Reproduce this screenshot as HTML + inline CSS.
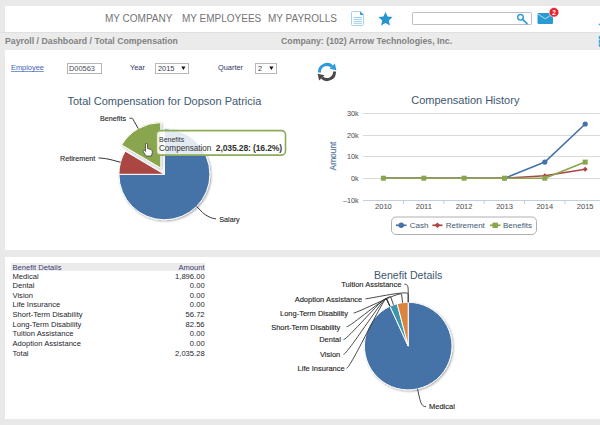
<!DOCTYPE html>
<html><head><meta charset="utf-8">
<style>
*{margin:0;padding:0;box-sizing:border-box}
html,body{width:600px;height:425px;overflow:hidden;background:#e9e9e9;font-family:"Liberation Sans",sans-serif}
.abs{position:absolute;white-space:nowrap}
#hdr{position:absolute;left:5px;top:6px;width:595px;height:26px;background:#fff}
#bc{position:absolute;left:0;top:32px;width:600px;height:18px;background:#ebebeb;border-top:1px solid #e0e0e0}
#p1{position:absolute;left:5px;top:50px;width:595px;height:200px;background:#fff}
#p2{position:absolute;left:5px;top:257px;width:595px;height:162px;background:#fff}
.nav{font-size:10px;color:#747474;top:13.3px;line-height:11px}
.bct{font-size:8.75px;font-weight:bold;color:#828282;top:36px;line-height:10px}
.lbl{font-size:7.4px;color:#2f3560;line-height:9px}
#svg{position:absolute;left:0;top:0}
.tb{left:12.5px;font-size:7.6px;color:#25252c;line-height:9.6px}
.tb.r{left:auto;right:395.4px}
.tb.h{color:#3a3a72}
</style></head><body>
<div id="hdr"></div>
<div id="bc"></div>
<div id="p1"></div>
<div id="p2"></div>

<div class="abs nav" style="left:105px">MY COMPANY</div>
<div class="abs nav" style="left:182px">MY EMPLOYEES</div>
<div class="abs nav" style="left:268px">MY PAYROLLS</div>

<div class="abs bct" style="left:5px">Payroll / Dashboard / Total Compensation</div>
<div class="abs bct" style="left:281px">Company: (102) Arrow Technologies, Inc.</div>

<!-- form row -->
<div class="abs lbl" style="left:11px;top:63px;color:#4462b4;text-decoration:underline;text-decoration-skip-ink:none;text-decoration-color:#7f97d2;text-underline-offset:1px">Employee</div>
<div class="abs" style="left:67px;top:63px;width:34.5px;height:10.5px;border:1px solid #b5b5b5;background:#fff"></div>
<div class="abs lbl" style="left:69px;top:63.5px;color:#4a4a5a">D00563</div>
<div class="abs lbl" style="left:130px;top:63px">Year</div>
<div class="abs" style="left:155px;top:63px;width:33.5px;height:11px;border:1px solid #b8b8b8;background:#fff"></div>
<div class="abs lbl" style="left:158px;top:64.3px;color:#3a3a4a">2015</div>
<div class="abs lbl" style="left:218px;top:63px">Quarter</div>
<div class="abs" style="left:255px;top:63px;width:21.5px;height:11px;border:1px solid #b8b8b8;background:#fff"></div>
<div class="abs lbl" style="left:258px;top:64.3px;color:#3a3a4a">2</div>

<!-- table -->
<div class="abs" style="left:11px;top:263px;width:194px;height:7.6px;background:#ebebeb"></div>
<div class="abs tb h" style="top:263.8px;line-height:8px">Benefit Details</div><div class="abs tb h r" style="top:263.8px;line-height:8px">Amount</div>
<div class="abs tb" style="top:271.50px">Medical</div><div class="abs tb r" style="top:271.50px">1,896.00</div>
<div class="abs tb" style="top:281.15px">Dental</div><div class="abs tb r" style="top:281.15px">0.00</div>
<div class="abs tb" style="top:290.80px">Vision</div><div class="abs tb r" style="top:290.80px">0.00</div>
<div class="abs tb" style="top:300.45px">Life Insurance</div><div class="abs tb r" style="top:300.45px">0.00</div>
<div class="abs tb" style="top:310.10px">Short-Term Disability</div><div class="abs tb r" style="top:310.10px">56.72</div>
<div class="abs tb" style="top:319.75px">Long-Term Disability</div><div class="abs tb r" style="top:319.75px">82.56</div>
<div class="abs tb" style="top:329.40px">Tuition Assistance</div><div class="abs tb r" style="top:329.40px">0.00</div>
<div class="abs tb" style="top:339.05px">Adoption Assistance</div><div class="abs tb r" style="top:339.05px">0.00</div>
<div class="abs tb" style="top:348.70px">Total</div><div class="abs tb r" style="top:348.70px">2,035.28</div>

<svg id="svg" width="600" height="425" viewBox="0 0 600 425" font-family="Liberation Sans, sans-serif">
<defs>
<filter id="sh" x="-20%" y="-20%" width="140%" height="140%"><feGaussianBlur in="SourceAlpha" stdDeviation="1"/><feOffset dx="1" dy="1"/><feComponentTransfer><feFuncA type="linear" slope="0.35"/></feComponentTransfer><feMerge><feMergeNode/><feMergeNode in="SourceGraphic"/></feMerge></filter>
</defs>

<path d="M181.3 66.6 H185.5 L183.4 70 Z M269.3 66.6 H273.5 L271.4 70 Z" fill="#111"/>
<!-- header icons -->
<g>
 <path d="M353.5 11.5 H360 L363.5 15 V24.5 Q363.5 25.5 362.5 25.5 H352.5 Q351.5 25.5 351.5 24.5 V12.5 Q351.5 11.5 352.5 11.5 Z" fill="#fff" stroke="#a3d3ee" stroke-width="1"/>
 <path d="M360 11.2 L363.8 15 H361 Q360 15 360 14 Z" fill="#2d9ad3"/>
 <path d="M353.5 17.5H362 M353.5 19.4H362 M353.5 21.4H362 M353.5 23.3H362" stroke="#92c9e8" stroke-width="0.9"/>
 <path d="M385.50 11.95 L387.56 16.57 L392.59 17.10 L388.83 20.48 L389.88 25.43 L385.50 22.90 L381.12 25.43 L382.17 20.48 L378.41 17.10 L383.44 16.57 Z" fill="#2596d0"/>
 <rect x="412.5" y="12.5" width="119" height="12" rx="0.8" fill="#fff" stroke="#bdbdbd"/>
 <circle cx="520.5" cy="17.3" r="2.8" fill="none" stroke="#2a9ad6" stroke-width="1.4"/>
 <path d="M522.6 19.4 L527 23.6" stroke="#2a9ad6" stroke-width="1.6" stroke-linecap="round"/>
 <rect x="537.5" y="13" width="15.5" height="11" rx="1" fill="#2a9bd2"/>
 <path d="M537.8 14 L545.2 18.8 L552.7 14" fill="none" stroke="#d8eefa" stroke-width="0.8"/>
 <circle cx="554" cy="12.3" r="4.8" fill="#e8202a" stroke="#fff" stroke-width="0.6"/>
 <text x="554" y="14.8" font-size="6.5" font-weight="bold" fill="#fff" text-anchor="middle">2</text>
 <rect x="598.8" y="23.7" width="1.2" height="1.5" fill="#3aa6de"/>
 <rect x="598.8" y="36" width="1.2" height="3.2" fill="#3aa6de"/>
 <rect x="598.8" y="39.8" width="1.2" height="3.2" fill="#3aa6de"/>
 <rect x="598.8" y="43.5" width="1.2" height="3.2" fill="#3aa6de"/>
</g>

<!-- refresh icon -->
<g fill="none" stroke-width="3">
 <path d="M319.5 72.5 A7.5 7.5 0 0 1 332.02 66.43" stroke="#2f9bd8"/>
 <path d="M334.9 63.5 L336.4 70.3 L329.5 68.7 Z" fill="#2f9bd8" stroke="none"/>
 <path d="M334.5 71.5 A7.5 7.5 0 0 1 321.98 77.57" stroke="#4a4a4a"/>
 <path d="M319.1 80.5 L317.6 73.7 L324.5 75.3 Z" fill="#4a4a4a" stroke="none"/>
</g>

<!-- Pie 1 -->
<text x="67.5" y="104.5" font-size="11" fill="#3E576F">Total Compensation for Dopson Patricia</text>
<g filter="url(#sh)" stroke="#fff" stroke-width="1" stroke-linejoin="round">
 <path d="M164.4 174.3 L164.40 128.80 A45.5 45.5 0 1 1 118.90 174.30 Z" fill="#4572A7"/>
 <path d="M164.4 174.3 L118.90 174.30 A45.5 45.5 0 0 1 125.24 151.14 Z" fill="#AA4643"/>
 <path d="M160.80 168.10 L121.64 144.94 A45.5 45.5 0 0 1 160.80 122.60 Z" fill="#89A54E"/>
</g>
<g fill="none" stroke="#333" stroke-width="1">
 <path d="M216.00 218.80 C212.00 218.80 205.59 215.49 202.58 212.48 L196.57 206.47"/>
 <path d="M98.50 158.00 C102.50 158.00 108.21 158.93 112.31 160.05 L120.51 162.29"/>
 <path d="M129.50 118.30 C133.50 118.30 131.94 117.50 134.05 121.19 L138.26 128.58"/>
</g>
<g font-size="7.2" fill="#1a1a1a" stroke="#222" stroke-width="0.1">
 <text x="100" y="121">Benefits</text>
 <text x="60" y="160.7">Retirement</text>
 <text x="219.3" y="221.7">Salary</text>
</g>
<!-- tooltip -->
<rect x="156.3" y="130.6" width="129.2" height="24.5" rx="4" fill="#fff" fill-opacity="0.85" stroke="#8dab58" stroke-width="1.6"/>
<text x="159" y="142.2" font-size="7" fill="#333">Benefits</text>
<text x="159" y="151.2" font-size="8.2" fill="#333" letter-spacing="-0.05">Compensation</text>
<text x="215.8" y="151.2" font-size="8.6" font-weight="bold" fill="#333" letter-spacing="-0.15">2,035.28: (16.2%)</text>
<!-- cursor -->
<path d="M145.5 143.8 Q146.5 143 147.5 143.8 L147.5 148.5 L151 149.5 Q152.5 150.5 152.3 152.5 L151.5 156 H146 L143.2 151.5 Q143 150 144.4 150.3 L145.5 151.4 Z" fill="#fff" stroke="#333" stroke-width="0.7"/>

<!-- line chart -->
<text x="411.2" y="104" font-size="11" fill="#3E576F">Compensation History</text>
<g stroke="#d9d9d9" stroke-width="1">
 <path d="M363 113.5H600 M363 135.5H600 M363 156.5H600 M363 178.5H600"/>
</g>
<path d="M363 200.5H600" stroke="#C0D0E0" stroke-width="1"/>
<path d="M403.5 200V204 M443.8 200V204 M484.2 200V204 M524.5 200V204 M564.9 200V204" stroke="#C0D0E0"/>
<g font-size="7.2" fill="#555" stroke="#555" stroke-width="0.06" text-anchor="end">
 <text x="358.6" y="116">30k</text>
 <text x="358.6" y="137.7">20k</text>
 <text x="358.6" y="159.3">10k</text>
 <text x="358.6" y="181">0k</text>
 <text x="358.6" y="202.5">–10k</text>
</g>
<text transform="translate(336.3 156) rotate(-90)" font-size="8.4" fill="#4d759e" stroke="#4d759e" stroke-width="0.15" text-anchor="middle">Amount</text>
<g font-size="7.5" fill="#555" stroke="#555" stroke-width="0.06" text-anchor="middle">
 <text x="383.4" y="208.7">2010</text>
 <text x="423.8" y="208.7">2011</text>
 <text x="464.1" y="208.7">2012</text>
 <text x="504.5" y="208.7">2013</text>
 <text x="544.8" y="208.7">2014</text>
 <text x="585.2" y="208.7">2015</text>
</g>
<g fill="none" stroke-width="1.6" stroke-linejoin="round">
 <path d="M383.4 178.2 L423.8 178.2 L464.1 178.2 L504.5 178.2 L544.8 162.1 L585.2 124" stroke="#4572A7"/>
 <path d="M383.4 178.2 L423.8 178.2 L464.1 178.2 L504.5 178.2 L544.8 175.7 L585.2 169.2" stroke="#AA4643"/>
 <path d="M383.4 178.2 L423.8 178.2 L464.1 178.2 L504.5 178.2 L544.8 178.2 L585.2 162.1" stroke="#89A54E"/>
</g>
<g fill="#4572A7">
 <circle cx="504.5" cy="178.2" r="2.3"/><circle cx="544.8" cy="162.1" r="2.6"/><circle cx="585.2" cy="124" r="2.6"/>
</g>
<g fill="#AA4643">
 <path d="M544.8 173.2 L547.3 175.7 L544.8 178.2 L542.3 175.7 Z M585.2 166.7 L587.7 169.2 L585.2 171.7 L582.7 169.2 Z"/>
</g>
<g fill="#89A54E">
 <rect x="380.9" y="175.7" width="5" height="5"/><rect x="421.3" y="175.7" width="5" height="5"/><rect x="461.6" y="175.7" width="5" height="5"/><rect x="502" y="175.7" width="5" height="5"/><rect x="542.3" y="175.7" width="5" height="5"/><rect x="582.7" y="159.6" width="5" height="5"/>
</g>
<!-- legend -->
<rect x="391.5" y="217" width="145" height="17.5" rx="4.5" fill="#fff" stroke="#b0b0b0"/>
<g font-size="8" fill="#3E576F">
 <path d="M396 225.3H406.5" stroke="#4572A7" stroke-width="1.7"/><circle cx="401.2" cy="225.3" r="2.7" fill="#4572A7"/>
 <text x="409.7" y="228.1">Cash</text>
 <path d="M432.4 225.3H442.5" stroke="#AA4643" stroke-width="1.7"/><path d="M437.4 222.5 L440.2 225.3 L437.4 228.1 L434.6 225.3Z" fill="#AA4643"/>
 <text x="445.7" y="228.1">Retirement</text>
 <path d="M490 225.3H500.5" stroke="#89A54E" stroke-width="1.7"/><rect x="492.5" y="222.6" width="5.4" height="5.4" fill="#89A54E"/>
 <text x="503" y="228.1">Benefits</text>
</g>

<!-- Pie 2 -->
<text x="374" y="278.9" font-size="10.6" fill="#3E576F">Benefit Details</text>
<g filter="url(#sh)" stroke="#fff" stroke-width="1" stroke-linejoin="round">
 <path d="M408.2 346.1 L408.20 302.30 A43.8 43.8 0 1 1 389.94 306.29 Z" fill="#4572A7"/>
 <path d="M408.2 346.1 L389.94 306.29 A43.8 43.8 0 0 1 397.16 303.71 Z" fill="#3D96AE"/>
 <path d="M408.2 346.1 L397.16 303.71 A43.8 43.8 0 0 1 408.20 302.30 Z" fill="#DB843D"/>
</g>
<g fill="none" stroke="#333" stroke-width="0.9">
 <path d="M404.50 284.20 C408.50 284.20 408.20 287.36 408.20 294.00 L408.20 302.30"/>
 <path d="M365.50 298.80 C369.50 298.80 408.20 289.85 408.20 294.00 L408.20 302.30"/>
 <path d="M353.50 313.00 C357.50 313.00 401.05 290.31 401.58 294.42 L402.63 302.66"/>
 <path d="M346.50 326.80 C350.50 326.80 389.31 293.12 390.71 297.02 L393.49 304.84"/>
 <path d="M343.50 339.60 C347.50 339.60 384.75 294.97 386.48 298.74 L389.94 306.29"/>
 <path d="M343.50 354.30 C347.50 354.30 384.75 294.97 386.48 298.74 L389.94 306.29"/>
 <path d="M346.50 368.30 C350.50 368.30 384.75 294.97 386.48 298.74 L389.94 306.29"/>
 <path d="M426.00 406.60 C422.00 406.60 420.73 403.49 419.31 397.00 L417.54 388.89"/>
</g>
<g font-size="7.5" fill="#1e1e1e" stroke="#222" stroke-width="0.12">
 <text x="341.3" y="286.9">Tuition Assistance</text>
 <text x="294.7" y="301.5">Adoption Assistance</text>
 <text x="280" y="315.7">Long-Term Disability</text>
 <text x="271.2" y="329.5">Short-Term Disability</text>
 <text x="319.2" y="342.3">Dental</text>
 <text x="320" y="357">Vision</text>
 <text x="297.6" y="371">Life Insurance</text>
 <text x="429" y="409.3">Medical</text>
</g>
</svg>
</body></html>
